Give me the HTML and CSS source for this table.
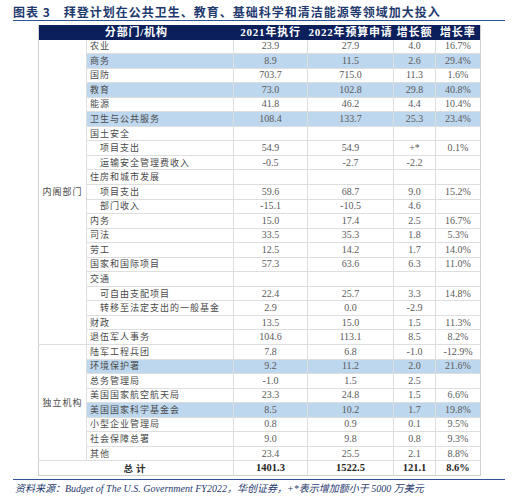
FILE: index.html
```html
<!doctype html>
<html lang="zh-CN">
<head>
  <meta charset="UTF-8">
  <title>图表 3</title>
  <link rel="stylesheet" href="styles.css">
</head>
<body>
  <div class="page">
    <h1 class="title"><span class="fig">图表 3</span>拜登计划在公共卫生、教育、基础科学和清洁能源等领域加大投入</h1>

    <table class="budget">
      <colgroup>
        <col class="c-group">
        <col class="c-name">
        <col class="c-y21">
        <col class="c-y22">
        <col class="c-diff">
        <col class="c-rate">
      </colgroup>
      <thead>
        <tr>
          <th colspan="2">分部门/机构</th>
          <th>2021年执行</th>
          <th>2022年预算申请</th>
          <th>增长额</th>
          <th>增长率</th>
        </tr>
      </thead>
      <tbody>
        <tr><td class="group" rowspan="21">内阁部门</td><td class="name">农业</td><td>23.9</td><td>27.9</td><td>4.0</td><td>16.7%</td></tr>
        <tr class="hl"><td class="name">商务</td><td>8.9</td><td>11.5</td><td>2.6</td><td>29.4%</td></tr>
        <tr><td class="name">国防</td><td>703.7</td><td>715.0</td><td>11.3</td><td>1.6%</td></tr>
        <tr class="hl"><td class="name">教育</td><td>73.0</td><td>102.8</td><td>29.8</td><td>40.8%</td></tr>
        <tr><td class="name">能源</td><td>41.8</td><td>46.2</td><td>4.4</td><td>10.4%</td></tr>
        <tr class="hl"><td class="name">卫生与公共服务</td><td>108.4</td><td>133.7</td><td>25.3</td><td>23.4%</td></tr>
        <tr><td class="name">国土安全</td><td></td><td></td><td></td><td></td></tr>
        <tr><td class="name sub">项目支出</td><td>54.9</td><td>54.9</td><td>+*</td><td>0.1%</td></tr>
        <tr><td class="name sub">运输安全管理费收入</td><td>-0.5</td><td>-2.7</td><td>-2.2</td><td></td></tr>
        <tr><td class="name">住房和城市发展</td><td></td><td></td><td></td><td></td></tr>
        <tr><td class="name sub">项目支出</td><td>59.6</td><td>68.7</td><td>9.0</td><td>15.2%</td></tr>
        <tr><td class="name sub">部门收入</td><td>-15.1</td><td>-10.5</td><td>4.6</td><td></td></tr>
        <tr><td class="name">内务</td><td>15.0</td><td>17.4</td><td>2.5</td><td>16.7%</td></tr>
        <tr><td class="name">司法</td><td>33.5</td><td>35.3</td><td>1.8</td><td>5.3%</td></tr>
        <tr><td class="name">劳工</td><td>12.5</td><td>14.2</td><td>1.7</td><td>14.0%</td></tr>
        <tr><td class="name">国家和国际项目</td><td>57.3</td><td>63.6</td><td>6.3</td><td>11.0%</td></tr>
        <tr><td class="name">交通</td><td></td><td></td><td></td><td></td></tr>
        <tr><td class="name sub">可自由支配项目</td><td>22.4</td><td>25.7</td><td>3.3</td><td>14.8%</td></tr>
        <tr><td class="name sub">转移至法定支出的一般基金</td><td>2.9</td><td>0.0</td><td>-2.9</td><td></td></tr>
        <tr><td class="name">财政</td><td>13.5</td><td>15.0</td><td>1.5</td><td>11.3%</td></tr>
        <tr><td class="name">退伍军人事务</td><td>104.6</td><td>113.1</td><td>8.5</td><td>8.2%</td></tr>

        <tr><td class="group" rowspan="8">独立机构</td><td class="name">陆军工程兵团</td><td>7.8</td><td>6.8</td><td>-1.0</td><td>-12.9%</td></tr>
        <tr class="hl"><td class="name">环境保护署</td><td>9.2</td><td>11.2</td><td>2.0</td><td>21.6%</td></tr>
        <tr><td class="name">总务管理局</td><td>-1.0</td><td>1.5</td><td>2.5</td><td></td></tr>
        <tr><td class="name">美国国家航空航天局</td><td>23.3</td><td>24.8</td><td>1.5</td><td>6.6%</td></tr>
        <tr class="hl"><td class="name">美国国家科学基金会</td><td>8.5</td><td>10.2</td><td>1.7</td><td>19.8%</td></tr>
        <tr><td class="name">小型企业管理局</td><td>0.8</td><td>0.9</td><td>0.1</td><td>9.5%</td></tr>
        <tr><td class="name">社会保障总署</td><td>9.0</td><td>9.8</td><td>0.8</td><td>9.3%</td></tr>
        <tr><td class="name">其他</td><td>23.4</td><td>25.5</td><td>2.1</td><td>8.8%</td></tr>

        <tr class="total"><td colspan="2" class="total-label">总计</td><td>1401.3</td><td>1522.5</td><td>121.1</td><td>8.6%</td></tr>
      </tbody>
    </table>

    <p class="source">资料来源：Budget of The U.S. Government FY2022，华创证券，+*表示增加额小于 5000 万美元</p>
  </div>
</body>
</html>
```

FILE: styles.css
```css
html, body {
    margin: 0;
    padding: 0;
    background: #fff;
}
.page {
    width: 519px;
    padding-top: 4px;
    box-sizing: border-box;
}
.title {
    margin: 0 14px 0 13px;
    height: 16px;
    border-bottom: 1.5px solid #2f5597;
    font-family: "Noto Sans CJK SC", sans-serif;
    font-size: 12px;
    line-height: 15px;
    font-weight: bold;
    letter-spacing: 1px;
    color: #1f3a6e;
    white-space: nowrap;
}
.fig {
    margin-right: 13px;
}
.budget {
    margin: 4px 0 0 38px;
    width: 442px;
    table-layout: fixed;
    border-collapse: collapse;
    border-left: 1px solid #d0d0d0;
    border-right: 1px solid #d0d0d0;
    border-bottom: 1px solid #d0d0d0;
}
.c-group { width: 48px; }
.c-name  { width: 147px; }
.c-y21   { width: 74px; }
.c-y22   { width: 86px; }
.c-diff  { width: 42px; }
.c-rate  { width: 45px; }

.budget th {
    height: 14.5px;
    padding: 0;
    background: #0b1f5c;
    color: #fff;
    font-family: "Liberation Serif", "Noto Sans CJK SC", serif;
    font-size: 11px;
    font-weight: bold;
    letter-spacing: 0.8px;
    line-height: 13px;
    text-align: center;
    white-space: nowrap;
}
.budget td {
    height: 13.55px;
    padding: 0;
    border: 1px solid #dedede;
    font-family: "Liberation Serif", serif;
    font-size: 10px;
    line-height: 12px;
    color: #5a5a5a;
    text-align: center;
    white-space: nowrap;
}
.budget td.name {
    text-align: left;
    padding-left: 3px;
    font-family: "Noto Sans CJK SC", sans-serif;
    font-size: 9px;
    letter-spacing: 1px;
    color: #4a4a4a;
}
.budget td.sub {
    padding-left: 13px;
}
.budget td.group {
    border-left: none;
    font-family: "Noto Sans CJK SC", sans-serif;
    font-size: 9px;
    letter-spacing: 1px;
    color: #4a4a4a;
    background: #fff;
}
.budget tbody tr:first-child td {
    border-top: none;
}
.hl td {
    background: #bdd7ee;
}
.budget td:last-child {
    border-right: none;
}
.total td {
    font-weight: bold;
    color: #262626;
    font-size: 10.5px;
    border-bottom: none;
}
.total td.total-label {
    border-left: none;
    font-family: "Noto Sans CJK SC", sans-serif;
    font-size: 9.5px;
    letter-spacing: 3px;
    color: #333;
}
.source {
    margin: 3px 14px 0 13px;
    padding: 2px 0 0 2px;
    border-top: 1.5px solid #2f5597;
    font-family: "Liberation Serif", "Noto Sans CJK SC", serif;
    font-size: 10px;
    font-style: italic;
    line-height: 14px;
    color: #1f3a6e;
    white-space: nowrap;
}
```
